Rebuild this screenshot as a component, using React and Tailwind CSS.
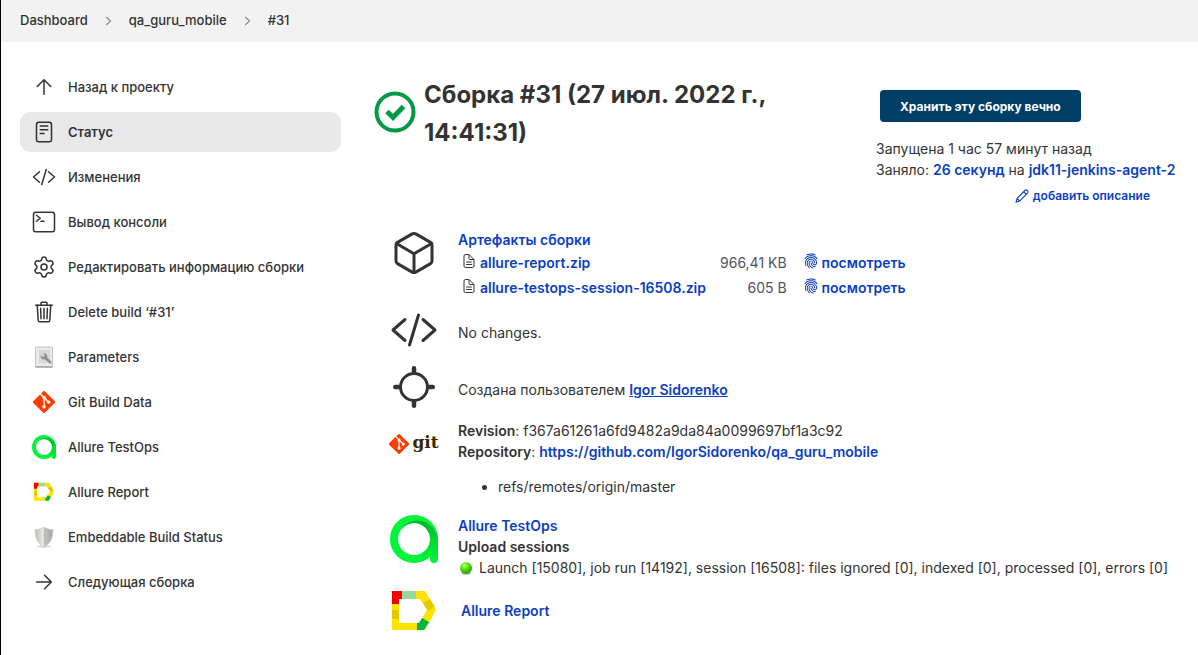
import React from "react";
import {
  IoReaderOutline,
  IoCodeSlashOutline,
  IoTerminalOutline,
  IoTrashOutline,
  IoCubeOutline,
  IoLocateOutline,
  IoDocumentTextOutline,
  IoFingerPrint,
} from "react-icons/io5";
import { Settings } from "lucide-react";

const linkClass = "font-semibold text-[#0b3fbf] hover:underline";

function Arrow({ right }) {
  return (
    <svg viewBox="0 0 512 512" className={right ? "size-6 rotate-90" : "size-6"} fill="none" stroke="currentColor" strokeWidth="32" strokeLinecap="round" strokeLinejoin="round" aria-hidden="true">
      <path d="M112 244 256 100l144 144M256 120v292" />
    </svg>
  );
}

function Chevron() {
  return (
    <svg viewBox="0 0 8 12" className="h-[10px] w-[7px]" fill="none" stroke="#8a8a8a" strokeWidth="1.3" strokeLinecap="round" strokeLinejoin="round" aria-hidden="true">
      <path d="M1.5 1.5 6.5 6l-5 4.5" />
    </svg>
  );
}

function ParametersIcon() {
  return (
    <svg viewBox="0 0 24 24" className="size-6" aria-hidden="true">
      <rect x="3.5" y="2" width="17" height="20" rx="1" fill="#e9e9e9" stroke="#c4c4c4" />
      <path d="M3.5 22h17" stroke="#8b8b8b" />
      <rect x="7" y="5" width="11" height="13" fill="#d6d6d6" />
      <path d="M11 8.200l1.700 1.700-.4 1.600-1.700.4-1.800-1.600c-.4 1.800.4 3.500 2.200 4 .8.200 1.500.1 2.200-.1l4.600 4.500 1.500-.2v-1.900l-4-3.900c.4-2.900-1.600-5-4.300-4.500z" fill="#8e8e8e" />
    </svg>
  );
}

function GitMark({ className }) {
  return (
    <svg viewBox="0 0 92 92" className={className} aria-hidden="true">
      <path fill="#ff3c00" d="M90.156 41.965 50.036 1.848a5.918 5.918 0 0 0-8.372 0l-8.328 8.332 10.566 10.566a7.030 7.030 0 0 1 7.230 1.684 7.034 7.034 0 0 1 1.669 7.277l10.187 10.184a7.028 7.028 0 0 1 7.278 1.672 7.040 7.040 0 0 1 0 9.957 7.050 7.050 0 0 1-9.965 0 7.044 7.044 0 0 1-1.528-7.660l-9.500-9.497V59.360a7.040 7.040 0 0 1 1.860 11.290 7.040 7.040 0 0 1-9.957 0 7.040 7.040 0 0 1 0-9.958 7.060 7.060 0 0 1 2.304-1.539V33.926a7.049 7.049 0 0 1-3.820-9.234L29.242 14.272 1.730 41.777a5.925 5.925 0 0 0 0 8.371L41.852 90.270a5.925 5.925 0 0 0 8.370 0l39.934-39.934a5.925 5.925 0 0 0 0-8.371" />
    </svg>
  );
}

function TestOpsMark({ className, id }) {
  return (
    <svg viewBox="0 0 48 48" className={className} fill="none" aria-hidden="true">
      <defs>
        <linearGradient id={id} x1="0.5" y1="0" x2="0.7" y2="1">
          <stop offset="0" stopColor="#00b82a" />
          <stop offset="0.3" stopColor="#00c42c" />
          <stop offset="1" stopColor="#00f53a" />
        </linearGradient>
      </defs>
      <circle cx="24" cy="24" r="20" stroke="#00f53a" strokeWidth="8" />
      <path d="M11.500 14C17 6 28 3 36.500 8 43 12 48 18 48 26v18a4 4 0 0 1-8 0V24A16 16 0 0 0 24 8c-5 0-9 2-12.500 6z" fill={`url(#${id})`} />
      <path d="M40 24c0 6-3 11-7 14v8c8-4 15-12 15-22v-4z" fill="#00e635" opacity=".55" />
    </svg>
  );
}

function ReportMark({ className }) {
  return (
    <svg viewBox="0 0 48 48" className={className} aria-hidden="true">
      <path fill="#ffe300" d="M2 4h33l11 19-11 20H2z" />
      <path fill="#97d89f" d="M12 4h14v8H12z" />
      <path fill="#f20000" d="M2 4h10v8H9v5H2z" />
      <path fill="#e6c900" d="M2 23h7v9H2zM33 16l7-4 5 8-7 4z" />
      <path fill="#fff" d="M9 12h21l7 11-8 13H9z" />
      <path fill="#00b53c" d="m32 31 7 4-5 8h-7v-7h2z" />
    </svg>
  );
}

function ShieldIcon() {
  return (
    <svg viewBox="0 0 24 24" className="size-6" aria-hidden="true">
      <defs>
        <linearGradient id="shield-steel" x1="0" y1="0" x2="1" y2="0">
          <stop offset="0" stopColor="#bcbdb7" />
          <stop offset="0.48" stopColor="#eceeea" />
          <stop offset="0.52" stopColor="#c4c6c0" />
          <stop offset="1" stopColor="#a4a69f" />
        </linearGradient>
      </defs>
      <ellipse cx="12" cy="21.500" rx="7" ry="1.200" fill="#d8d8d8" />
      <path d="M12 2c2 1.600 5 2.500 8.800 2.600.3 8.400-2.800 14.400-8.800 17.400C6 19 2.900 13 3.200 4.600 7 4.500 10 3.600 12 2z" fill="url(#shield-steel)" stroke="#c2c4be" strokeWidth=".7" />
      <path d="M12 4v17" stroke="#9a9c96" strokeWidth=".6" strokeDasharray="1 1" />
    </svg>
  );
}

function SuccessIcon() {
  return (
    <svg viewBox="0 0 42 42" className="mt-[25px] size-[42px] shrink-0" fill="none" stroke="#009a44" role="img" aria-label="Success">
      <circle cx="21" cy="21" r="18.500" strokeWidth="4" />
      <path d="m13 20.500 6 6L29.500 15.500" strokeWidth="5" />
    </svg>
  );
}

function Pencil() {
  return (
    <svg viewBox="0 0 16 16" className="size-4" fill="none" stroke="currentColor" strokeWidth="1.100" strokeLinejoin="round" strokeLinecap="round" aria-hidden="true">
      <path d="M2 14.300 3 10.600 10.800 2.500c1.700-1.700 4.300.9 2.700 2.600L5.600 13.100z M9.600 3.700l2.700 2.700M3.200 10.600l2.300 2.400" />
    </svg>
  );
}

function BallIcon() {
  return (
    <svg viewBox="0 0 16 16" className="size-4 shrink-0" role="img" aria-label="Success">
      <defs>
        <radialGradient id="ball-green" cx=".38" cy=".28" r=".75">
          <stop offset="0" stopColor="#d4ff9a" />
          <stop offset="0.35" stopColor="#62ef12" />
          <stop offset="1" stopColor="#219b00" />
        </radialGradient>
      </defs>
      <ellipse cx="8" cy="13.800" rx="5" ry="1.200" fill="#ccc" />
      <circle cx="8" cy="8" r="6" fill="url(#ball-green)" />
    </svg>
  );
}

const tasks = [
  { label: "Назад к проекту", icon: <Arrow /> },
  { label: "Статус", icon: <IoReaderOutline className="size-6" />, active: true },
  { label: "Изменения", icon: <IoCodeSlashOutline className="size-6" /> },
  { label: "Вывод консоли", icon: <IoTerminalOutline className="size-6" /> },
  { label: "Редактировать информацию сборки", icon: <Settings className="size-6" strokeWidth={1.5} /> },
  { label: "Delete build ‘#31’", icon: <IoTrashOutline className="size-6" /> },
  { label: "Parameters", icon: <ParametersIcon /> },
  { label: "Git Build Data", icon: <GitMark className="size-6 p-px" /> },
  { label: "Allure TestOps", icon: <TestOpsMark className="size-6" id="ops-small" /> },
  { label: "Allure Report", icon: <ReportMark className="size-6 p-px" /> },
  { label: "Embeddable Build Status", icon: <ShieldIcon /> },
  { label: "Следующая сборка", icon: <Arrow right /> },
];

const artifacts = [
  { name: "allure-report.zip", size: "966,41 KB" },
  { name: "allure-testops-session-16508.zip", size: "605 B" },
];

function Row({ icon, className = "", children }) {
  return (
    <section className={`flex gap-5 ${className}`}>
      <div className="flex h-12 w-12 shrink-0 items-center justify-center">{icon}</div>
      <div className="min-w-0">{children}</div>
    </section>
  );
}

export default function App() {
  return (
    <div className="min-h-screen border-l border-black bg-white font-['Inter','Liberation_Sans',sans-serif] text-[14px] leading-[21px] text-[#333]">
      <nav aria-label="Breadcrumb" className="flex h-[42px] items-center bg-[#f2f2f2] px-[19px] text-[13px] font-medium">
        <ol className="flex items-center gap-[17px] pb-px">
          <li><a href="#dashboard">Dashboard</a></li>
          <li><Chevron /></li>
          <li><a href="#project">qa_guru_mobile</a></li>
          <li><Chevron /></li>
          <li><a href="#31">#31</a></li>
        </ol>
      </nav>

      <div className="flex">
        <aside className="w-[340px] shrink-0 pt-[25px] pl-[19px]">
          <ul className="flex flex-col gap-[5px]">
            {tasks.map((t) => (
              <li key={t.label}>
                <a
                  href="#task"
                  aria-current={t.active ? "page" : undefined}
                  className={`flex h-10 items-center gap-3 rounded-[10px] px-3 text-[13px] ${t.active ? "bg-[#e9e9e9] font-semibold" : "font-medium"}`}
                >
                  {t.icon}
                  {t.label}
                </a>
              </li>
            ))}
          </ul>
        </aside>

        <main className="min-w-0 flex-1 pt-6 pr-[30px] pl-[33px]">
          <header className="flex justify-between pb-[23px]">
            <div className="flex gap-2">
              <SuccessIcon />
              <h1 className="max-w-[400px] pt-[10px] text-[24px] leading-[38px] font-bold">
                Сборка #31 (27 июл. 2022 г., 14:41:31)
              </h1>
            </div>
            <div className="flex w-[292px] shrink-0 flex-col items-start pt-6 whitespace-nowrap">
              <button type="button" className="ml-1 h-8 rounded-[4px] bg-[#003e66] px-5 text-[12px] font-bold text-white">
                Хранить эту сборку вечно
              </button>
              <p className="pt-4">Запущена 1 час 57 минут назад</p>
              <p>
                Заняло: <a href="#trend" className={linkClass}>26 секунд</a> на{" "}
                <a href="#agent" className={linkClass}>jdk11-jenkins-agent-2</a>
              </p>
              <a href="#describe" className="mt-[5px] mr-[18px] flex items-center gap-[3px] self-end text-[12px] font-semibold text-[#0b3fbf]">
                <Pencil />
                добавить описание
              </a>
            </div>
          </header>

          <div className="pl-4">
            <Row className="pb-[6px]" icon={<IoCubeOutline className="size-12" />}>
              <a href="#artifacts" className={linkClass}>Артефакты сборки</a>
              <table>
                <tbody>
                  {artifacts.map((a) => (
                    <tr key={a.name} className="h-[25px]">
                      <td className="pl-[3px]">
                        <div className="flex items-center gap-[3px]">
                          <IoDocumentTextOutline className="mb-1 size-4" />
                          <a href="#artifact" className={linkClass}>{a.name}</a>
                        </div>
                      </td>
                      <td className="pl-[14px] text-right text-[#4d545d]">{a.size}</td>
                      <td className="pl-4">
                        <a href="#fingerprint" className={`flex items-center gap-[3px] ${linkClass}`}>
                          <IoFingerPrint className="mb-1 size-4" />
                          посмотреть
                        </a>
                      </td>
                    </tr>
                  ))}
                </tbody>
              </table>
            </Row>

            <Row className="pb-[9px]" icon={<IoCodeSlashOutline className="size-12" />}>
              <p className="pt-4">No changes.</p>
            </Row>

            <Row className="pb-[9px]" icon={<IoLocateOutline className="size-12" />}>
              <p className="pt-4">
                Создана пользователем <a href="#user" className="font-semibold text-[#0b3fbf] underline">Igor Sidorenko</a>
              </p>
            </Row>

            <Row
              className="pb-[18px]"
              icon={
                <div className="flex items-center gap-[3px]" aria-label="git">
                  <GitMark className="size-5" />
                  <span className="pb-1 font-['DejaVu_Serif',serif] text-[17px] leading-5 font-bold text-[#362701]">git</span>
                </div>
              }
            >
              <p><b className="font-semibold">Revision</b>: f367a61261a6fd9482a9da84a0099697bf1a3c92</p>
              <p>
                <b className="font-semibold">Repository</b>:{" "}
                <a href="#repo" className={linkClass}>https://github.com/IgorSidorenko/qa_guru_mobile</a>
              </p>
              <ul className="list-disc pt-[14px] pl-10">
                <li>refs/remotes/origin/master</li>
              </ul>
            </Row>

            <Row className="pb-[9px]" icon={<TestOpsMark className="size-12" id="ops-large" />}>
              <a href="#testops" className={linkClass}>Allure TestOps</a>
              <p className="font-semibold">Upload sessions</p>
              <p className="flex items-center gap-[5px] whitespace-nowrap">
                <BallIcon />
                Launch [15080], job run [14192], session [16508]: files ignored [0], indexed [0], processed [0], errors [0]
              </p>
            </Row>

            <Row icon={<ReportMark className="size-12" />}>
              <p className="pt-[13px] pl-[3px]"><a href="#report" className={linkClass}>Allure Report</a></p>
            </Row>
          </div>
        </main>
      </div>
    </div>
  );
}
